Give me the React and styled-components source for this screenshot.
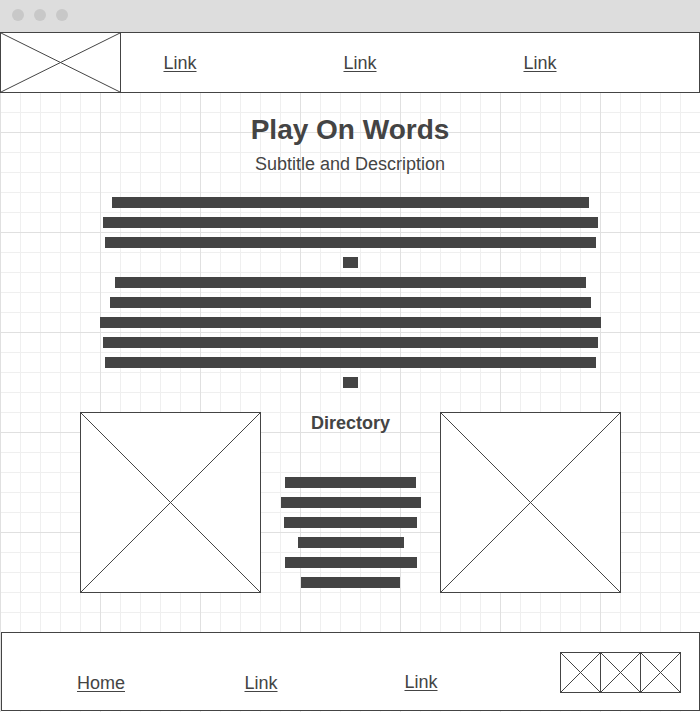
import styled, { createGlobalStyle } from "styled-components";

const GlobalStyle = createGlobalStyle`
html, body {
  margin: 0;
  padding: 0;
  overflow: hidden;
  background: #fff;
}
* { box-sizing: border-box; }
`;

const Window = styled.div`
width: 700px;
height: 712px;
display: flex;
flex-direction: column;
font-family: "Liberation Sans", Arial, sans-serif;
color: #444;
`;

const Chrome = styled.div`
height: 32px;
flex-shrink: 0;
background: #ddd;
display: flex;
align-items: center;
gap: 10px;
padding: 0 0 2px 12px;
`;

const Dot = styled.span`
width: 12px;
height: 12px;
border-radius: 50%;
background: #c8c8c8;
`;

const Canvas = styled.div`
flex: 1;
display: flex;
flex-direction: column;
background-color: #fff;
background-image:
  linear-gradient(#e0e0e0 1px, transparent 1px),
  linear-gradient(90deg, #e0e0e0 1px, transparent 1px),
  linear-gradient(#efefef 1px, transparent 1px),
  linear-gradient(90deg, #efefef 1px, transparent 1px);
background-size: 100px 100px, 100px 100px, 20px 20px, 20px 20px;
`;

const Header = styled.header`
height: 61px;
border: 1px solid #444;
background: #fff;
display: flex;
align-items: center;
`;

const Placeholder = styled.div`
width: ${(p) => p.$w}px;
height: ${(p) => p.$h}px;
border: 1px solid #444;
background: #fff;
flex-shrink: 0;
svg {
  display: block;
  width: 100%;
  height: 100%;
}
`;

const Logo = styled(Placeholder)`
border-width: 0 1px 0 0;
align-self: stretch;
height: auto;
`;

const NavLinks = styled.nav`
display: flex;
gap: 62px;
`;

const NavLink = styled.a`
width: 118px;
text-align: center;
font-size: 18px;
line-height: 22px;
color: #444;
text-decoration: underline;
text-underline-offset: 2px;
`;

const Main = styled.main`
display: flex;
flex-direction: column;
align-items: center;
padding-top: 21px;
`;

const Title = styled.h1`
margin: 0;
font-size: 28px;
line-height: 32px;
font-weight: bold;
`;

const Subtitle = styled.p`
margin: 7px 0 0;
font-size: 18px;
line-height: 22px;
`;

const TextBlock = styled.div`
display: flex;
flex-direction: column;
align-items: center;
gap: 9px;
margin-top: ${(p) => p.$top || 0}px;
`;

const Bar = styled.div`
height: 11px;
width: ${(p) => p.$w}px;
background: #444;
`;

const Directory = styled.section`
align-self: stretch;
display: flex;
gap: 19px;
padding-left: 80px;
margin-top: 24px;
`;

const DirColumn = styled.div`
width: 141px;
display: flex;
flex-direction: column;
align-items: center;
`;

const DirTitle = styled.h2`
margin: 0;
font-size: 18px;
line-height: 22px;
font-weight: bold;
`;

const Footer = styled.footer`
margin: 39px 0 0 1px;
height: 79px;
border: 1px solid #444;
background: #fff;
display: flex;
align-items: flex-end;
padding: 0 18px 18px 39px;
`;

const FootLinks = styled.div`
display: flex;
gap: 40px;
align-items: flex-end;
`;

const FootLink = styled.a`
width: 120px;
text-align: center;
font-size: 18px;
line-height: 18px;
color: #444;
text-decoration: underline;
text-underline-offset: 2px;
margin-bottom: ${(p) => (p.$raise ? 1 : 0)}px;
`;

const Social = styled.div`
margin-left: auto;
margin-bottom: -1px;
display: flex;
`;

const SocialBox = styled(Placeholder)`
& + & {
  border-left: none;
  width: 40px;
}
`;

const Cross = () => (
  <svg preserveAspectRatio="none" viewBox="0 0 100 100">
    <line x1="0" y1="0" x2="100" y2="100" stroke="#444" strokeWidth="1" vectorEffect="non-scaling-stroke" />
    <line x1="100" y1="0" x2="0" y2="100" stroke="#444" strokeWidth="1" vectorEffect="non-scaling-stroke" />
  </svg>
);

const introBars = [477, 495, 491, 15, 471, 481, 501, 495, 491, 15];
const dirBars = [131, 140, 133, 106, 132, 99];

const App = () => {
  return (
    <>
      <GlobalStyle />
      <Window>
        <Chrome>
          <Dot />
          <Dot />
          <Dot />
        </Chrome>
        <Canvas>
          <Header>
            <Logo $w={120}>
              <Cross />
            </Logo>
            <NavLinks>
              <NavLink>Link</NavLink>
              <NavLink>Link</NavLink>
              <NavLink>Link</NavLink>
            </NavLinks>
          </Header>
          <Main>
            <Title>Play On Words</Title>
            <Subtitle>Subtitle and Description</Subtitle>
            <TextBlock $top={22}>
              {introBars.map((w, i) => (
                <Bar key={i} $w={w} />
              ))}
            </TextBlock>
            <Directory>
              <Placeholder $w={181} $h={181}>
                <Cross />
              </Placeholder>
              <DirColumn>
                <DirTitle>Directory</DirTitle>
                <TextBlock $top={43}>
                  {dirBars.map((w, i) => (
                    <Bar key={i} $w={w} />
                  ))}
                </TextBlock>
              </DirColumn>
              <Placeholder $w={181} $h={181}>
                <Cross />
              </Placeholder>
            </Directory>
          </Main>
          <Footer>
            <FootLinks>
              <FootLink>Home</FootLink>
              <FootLink>Link</FootLink>
              <FootLink $raise>Link</FootLink>
            </FootLinks>
            <Social>
              <SocialBox $w={41} $h={41}>
                <Cross />
              </SocialBox>
              <SocialBox $w={41} $h={41}>
                <Cross />
              </SocialBox>
              <SocialBox $w={41} $h={41}>
                <Cross />
              </SocialBox>
            </Social>
          </Footer>
        </Canvas>
      </Window>
    </>
  );
};

export default App;
